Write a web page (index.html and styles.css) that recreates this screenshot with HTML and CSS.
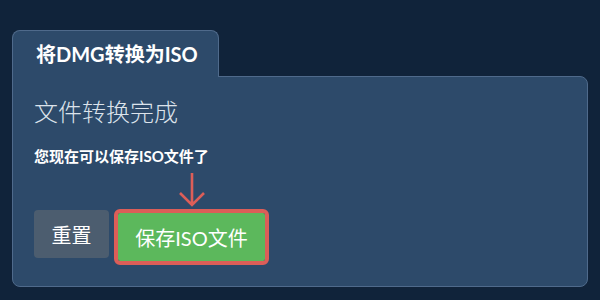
FILE: index.html
```html
<!DOCTYPE html>
<html lang="zh-CN">
<head>
  <meta charset="UTF-8">
  <meta name="viewport" content="width=device-width, initial-scale=1.0">
  <title>将DMG转换为ISO</title>
  <link rel="stylesheet" href="styles.css">
</head>
<body>
  <div class="converter">
    <div class="tab">将DMG转换为ISO</div>

    <div class="panel">
      <h2 class="status">文件转换完成</h2>
      <p class="message">您现在可以保存ISO文件了</p>

      <div class="actions">
        <button class="btn btn-reset">重置</button>
        <div class="save-wrap">
          <!-- pointer arrow -->
          <svg class="pointer" width="28" height="36" viewBox="0 0 28 36">
            <path d="M14 2 V34 M2 22 L14 34 L26 22" fill="none" stroke="#dc5e58" stroke-width="2.6"/>
          </svg>
          <button class="btn btn-save">保存ISO文件</button>
        </div>
      </div>
    </div>
  </div>
</body>
</html>
```

FILE: styles.css
```css
/* styles.css */
body {
  font-family: 'Lato', 'Noto Sans CJK SC', sans-serif;
  background-color: #10233a;
  color: #fff;
  margin: 0;
}

.converter {
  padding: 30px 12px 0 12px;
}

/* Tab */
.tab {
  display: inline-block;
  position: relative;
  z-index: 1;
  margin-bottom: -1px;
  padding: 12px 0 12px 23px;
  width: 182px;
  height: 22px;
  line-height: 22px;
  white-space: nowrap;
  font-size: 20px;
  font-weight: bold;
  background: #2d4a6a;
  border: 1px solid #4f6a8b;
  border-bottom: none;
  border-radius: 8px 8px 0 0;
}

/* Panel */
.panel {
  background: #2d4a6a;
  border: 1px solid #4f6a8b;
  border-radius: 0 8px 8px 8px;
  padding: 20px 21px 0 21px;
  height: 211px;
  box-sizing: border-box;
}

.status {
  margin: 0;
  font-size: 24px;
  font-weight: 300;
  line-height: 29px;
  color: #dce3eb;
}

.message {
  margin: 21px 0 0 0;
  font-size: 15px;
  font-weight: bold;
  line-height: 19px;
}

/* Buttons */
.actions {
  display: flex;
  align-items: flex-start;
  gap: 9px;
  margin-top: 44px;
}

.btn {
  font-family: 'Lato', 'Noto Sans CJK SC', sans-serif;
  font-size: 20px;
  color: #fff;
  height: 48px;
  border: none;
  border-radius: 4px;
  cursor: pointer;
}

.btn-reset {
  background-color: #4c5d6f;
  width: 75px;
  padding: 0;
}

.save-wrap {
  position: relative;
  margin-top: 3px;
}

.pointer {
  position: absolute;
  left: 50%;
  bottom: 100%;
  margin-left: -14px;
  margin-bottom: 6px;
}

.btn-save {
  background-color: #5cb85c;
  width: 147px;
  padding: 0;
  outline: 4px solid #dc5e58;
  border-radius: 2px;
  display: block;
}
```
